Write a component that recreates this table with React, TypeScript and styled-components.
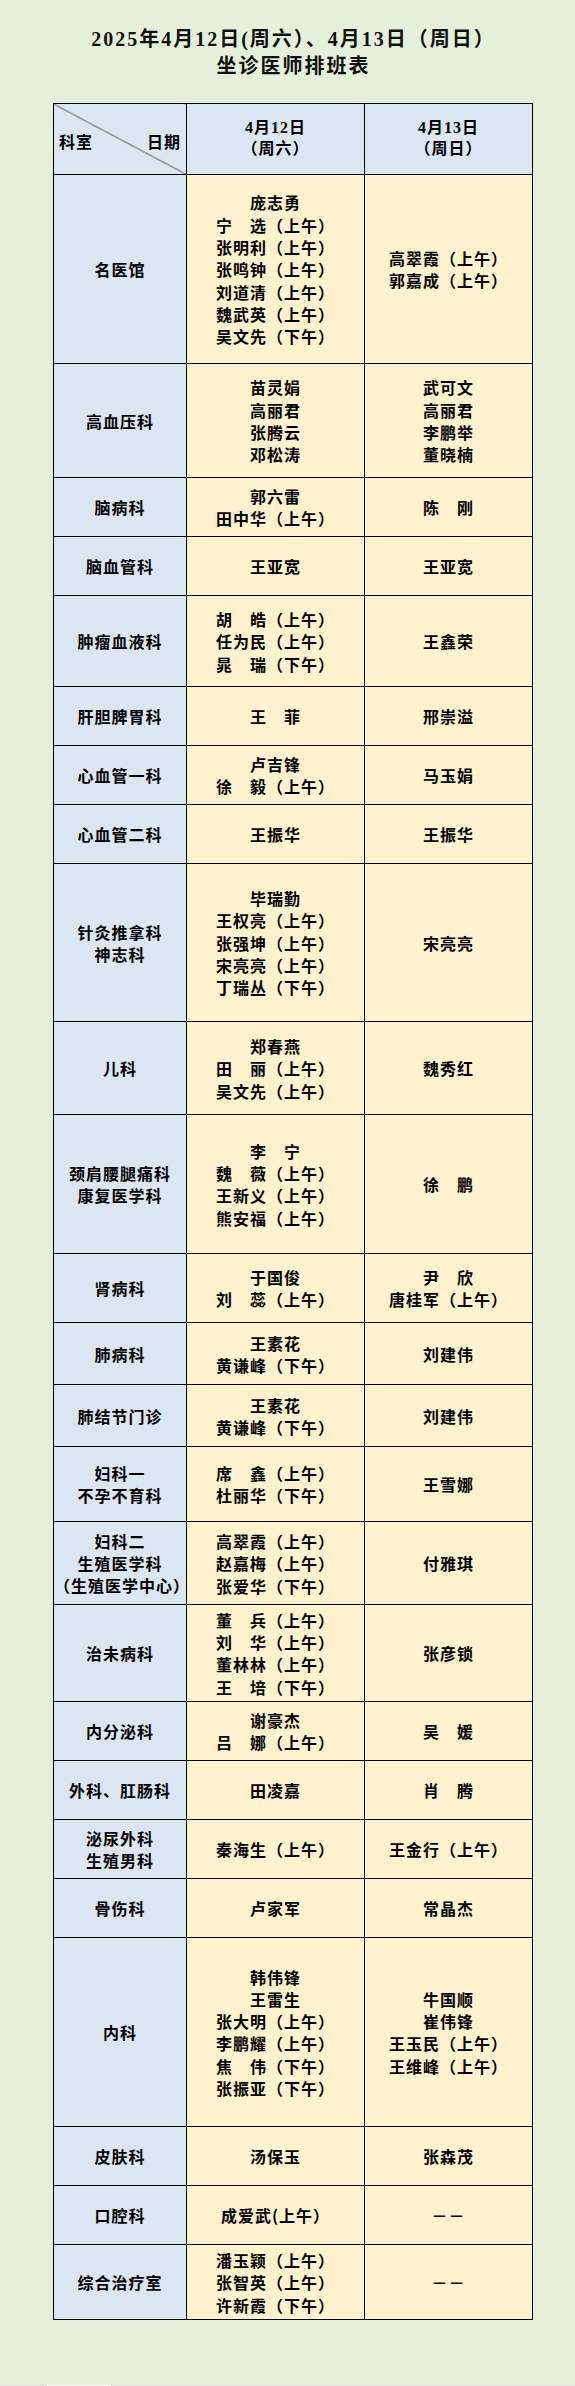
import React from 'react';
import styled, { createGlobalStyle } from 'styled-components';

type Row = {
    dept: string[];
    sat: string[];
    sun: string[];
    h: number;
};

// row heights follow the sheet (Excel rows), in px
const rows: Row[] = [
    { dept: ['名医馆'], h: 189, sat: ['庞志勇', '宁　选（上午）', '张明利（上午）', '张鸣钟（上午）', '刘道清（上午）', '魏武英（上午）', '吴文先（下午）'], sun: ['高翠霞（上午）', '郭嘉成（上午）'] },
    { dept: ['高血压科'], h: 114, sat: ['苗灵娟', '高丽君', '张腾云', '邓松涛'], sun: ['武可文', '高丽君', '李鹏举', '董晓楠'] },
    { dept: ['脑病科'], h: 59, sat: ['郭六雷', '田中华（上午）'], sun: ['陈　刚'] },
    { dept: ['脑血管科'], h: 59, sat: ['王亚宽'], sun: ['王亚宽'] },
    { dept: ['肿瘤血液科'], h: 91, sat: ['胡　皓（上午）', '任为民（上午）', '晁　瑞（下午）'], sun: ['王鑫荣'] },
    { dept: ['肝胆脾胃科'], h: 59, sat: ['王　菲'], sun: ['邢崇溢'] },
    { dept: ['心血管一科'], h: 59, sat: ['卢吉锋', '徐　毅（上午）'], sun: ['马玉娟'] },
    { dept: ['心血管二科'], h: 59, sat: ['王振华'], sun: ['王振华'] },
    { dept: ['针灸推拿科', '神志科'], h: 158, sat: ['毕瑞勤', '王权亮（上午）', '张强坤（上午）', '宋亮亮（上午）', '丁瑞丛（下午）'], sun: ['宋亮亮'] },
    { dept: ['儿科'], h: 93, sat: ['郑春燕', '田　丽（上午）', '吴文先（上午）'], sun: ['魏秀红'] },
    { dept: ['颈肩腰腿痛科', '康复医学科'], h: 139, sat: ['李　宁', '魏　薇（上午）', '王新义（上午）', '熊安福（上午）'], sun: ['徐　鹏'] },
    { dept: ['肾病科'], h: 69, sat: ['于国俊', '刘　蕊（上午）'], sun: ['尹　欣', '唐桂军（上午）'] },
    { dept: ['肺病科'], h: 62, sat: ['王素花', '黄谦峰（下午）'], sun: ['刘建伟'] },
    { dept: ['肺结节门诊'], h: 62, sat: ['王素花', '黄谦峰（下午）'], sun: ['刘建伟'] },
    { dept: ['妇科一', '不孕不育科'], h: 75, sat: ['席　鑫（上午）', '杜丽华（下午）'], sun: ['王雪娜'] },
    { dept: ['妇科二', '生殖医学科', '（生殖医学中心）'], h: 83, sat: ['高翠霞（上午）', '赵嘉梅（上午）', '张爱华（下午）'], sun: ['付雅琪'] },
    { dept: ['治未病科'], h: 97, sat: ['董　兵（上午）', '刘　华（上午）', '董林林（上午）', '王　培（下午）'], sun: ['张彦锁'] },
    { dept: ['内分泌科'], h: 59, sat: ['谢豪杰', '吕　娜（上午）'], sun: ['吴　媛'] },
    { dept: ['外科、肛肠科'], h: 59, sat: ['田凌嘉'], sun: ['肖　腾'] },
    { dept: ['泌尿外科', '生殖男科'], h: 59, sat: ['秦海生（上午）'], sun: ['王金行（上午）'] },
    { dept: ['骨伤科'], h: 59, sat: ['卢家军'], sun: ['常晶杰'] },
    { dept: ['内科'], h: 189, sat: ['韩伟锋', '王雷生', '张大明（上午）', '李鹏耀（上午）', '焦　伟（下午）', '张振亚（下午）'], sun: ['牛国顺', '崔伟锋', '王玉民（上午）', '王维峰（上午）'] },
    { dept: ['皮肤科'], h: 59, sat: ['汤保玉'], sun: ['张森茂'] },
    { dept: ['口腔科'], h: 59, sat: ['成爱武(上午）'], sun: ['－－'] },
    { dept: ['综合治疗室'], h: 75, sat: ['潘玉颖（上午）', '张智英（上午）', '许新霞（下午）'], sun: ['－－'] },
];

const GlobalStyle = createGlobalStyle`
    html, body {
        margin: 0;
        padding: 0;
        background: #e4f0d9;
    }
    body {
        font-family: "Noto Sans CJK SC", sans-serif;
        color: #000;
    }
`;

const Page = styled.div`
    height: 2386px;
    display: flex;
    flex-direction: column;
    background: #e4f0d9;
`;

const Sheet = styled.div`
    width: 479px;
    margin-left: 53px;
    padding-top: 26px;
    flex: 1;
`;

const Title = styled.h1`
    margin: 0 0 24px;
    padding-left: 2px;
    text-align: center;
    font-family: "Liberation Serif", "Noto Sans CJK SC", serif;
    font-weight: 700;
    font-size: 20px;
    letter-spacing: 2px;
    line-height: 26.7px;
    color: #111;
`;

const Table = styled.table`
    border-collapse: collapse;
    table-layout: fixed;
    width: 479px;
`;

const Tr = styled.tr<{ $h: number }>`
    height: ${p => p.$h}px;
`;

const tones = {
    head: '#dce6f0',
    dept: '#dce6f0',
    duty: '#fff2cc',
};

const Cell = styled.td<{ $tone: keyof typeof tones }>`
    border: 1px solid #000;
    padding: 0;
    text-align: center;
    vertical-align: middle;
    background: ${p => tones[p.$tone]};
    font-size: 16px;
    font-weight: 700;
    letter-spacing: 1px;
    line-height: ${p => (p.$tone === 'duty' ? '22.3px' : '22px')};
    white-space: nowrap;
`;

const DateHead = styled(Cell)`
    font-family: "Liberation Serif", "Noto Sans CJK SC", serif;
    line-height: 21px;
    padding-bottom: 3px;
`;

const CornerCell = styled(Cell)`
    background:
        linear-gradient(to top right, transparent calc(50% - 0.7px), #333 50%, transparent calc(50% + 0.7px)),
        ${tones.head};
`;

const Corner = styled.div`
    display: flex;
    justify-content: space-between;
    padding: 4px 5px 0 5px;
`;

const Line = styled.div``;

const Footer = styled.div`
    height: 1px;
    background: #d9d9d9;
    display: flex;
`;

const Tab = styled.div`
    width: 64px;
    margin-left: 47px;
    background: #fff;
`;

const lines = (xs: string[]) => xs.map((t, i) => <Line key={i}>{t}</Line>);

const App = () => (
    <>
        <GlobalStyle />
        <Page>
            <Sheet>
                <Title>
                    2025年4月12日(周六）、4月13日（周日）
                    <br />
                    坐诊医师排班表
                </Title>
                <Table>
                    <colgroup>
                        <col style={{ width: 133 }} />
                        <col style={{ width: 178 }} />
                        <col style={{ width: 168 }} />
                    </colgroup>
                    <tbody>
                        <Tr $h={71}>
                            <CornerCell $tone="head">
                                <Corner>
                                    <span>科室</span>
                                    <span>日期</span>
                                </Corner>
                            </CornerCell>
                            <DateHead $tone="head">
                                <Line>4月12日</Line>
                                <Line>（周六）</Line>
                            </DateHead>
                            <DateHead $tone="head">
                                <Line>4月13日</Line>
                                <Line>（周日）</Line>
                            </DateHead>
                        </Tr>
                        {rows.map((r, i) => (
                            <Tr key={i} $h={r.h}>
                                <Cell $tone="dept">{lines(r.dept)}</Cell>
                                <Cell $tone="duty">{lines(r.sat)}</Cell>
                                <Cell $tone="duty">{lines(r.sun)}</Cell>
                            </Tr>
                        ))}
                    </tbody>
                </Table>
            </Sheet>
            <Footer>
                <Tab />
            </Footer>
        </Page>
    </>
);

export default App;
